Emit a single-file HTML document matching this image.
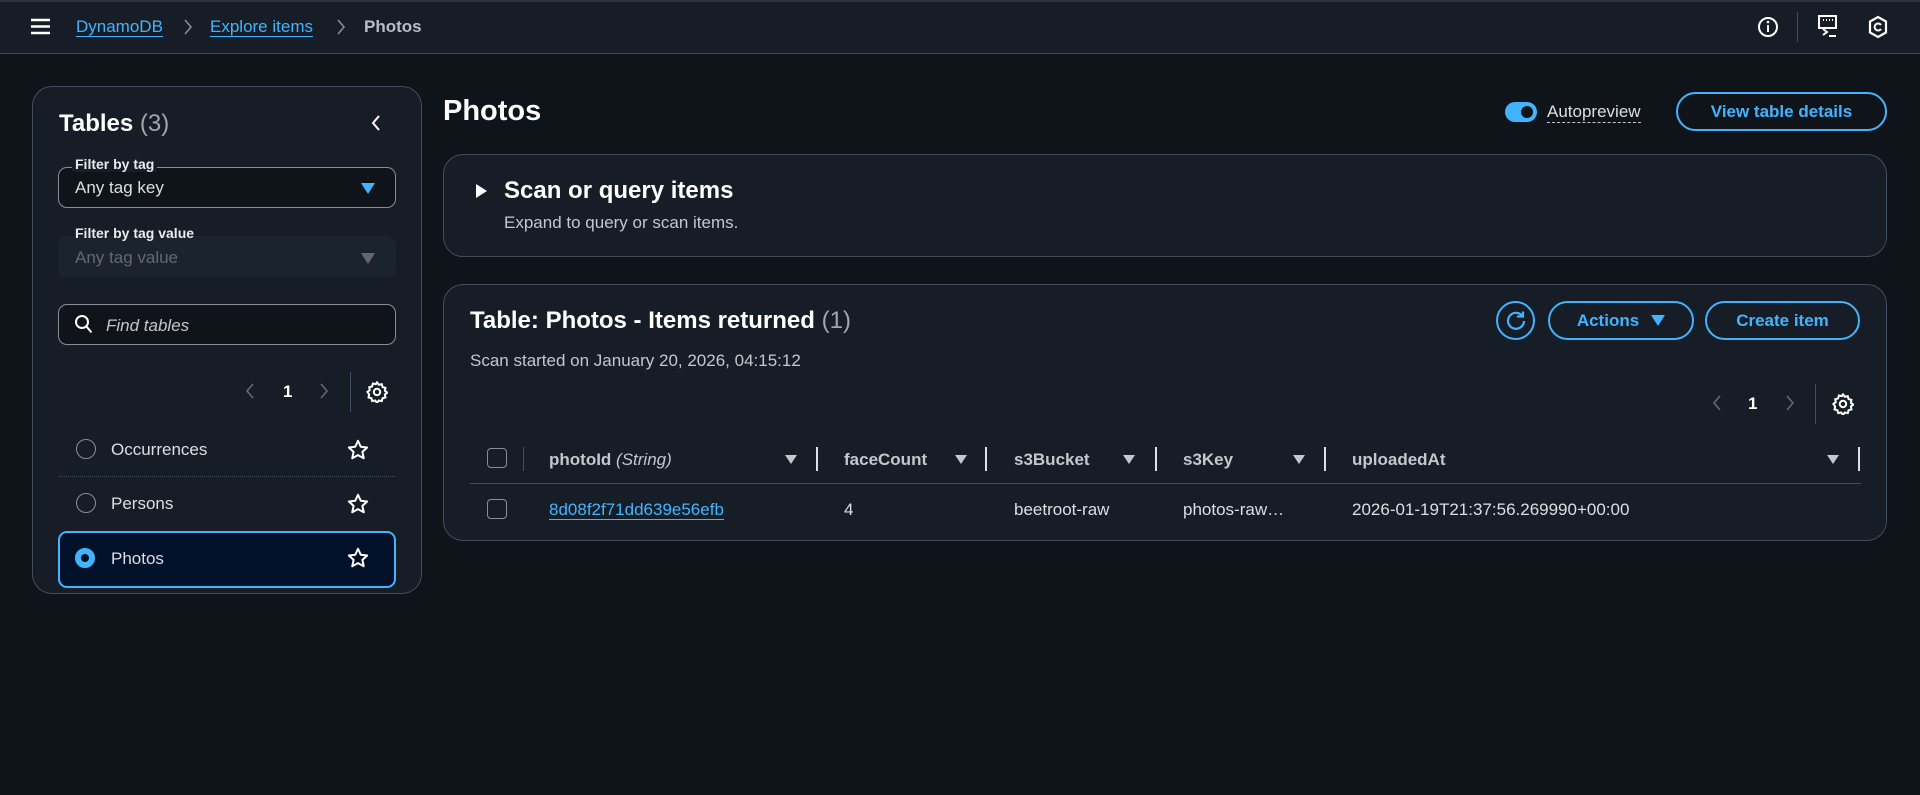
<!DOCTYPE html>
<html><head><meta charset="utf-8"><style>
*{box-sizing:border-box;margin:0;padding:0}
body{width:1920px;height:795px;background:#0f141a;font-family:"Liberation Sans",sans-serif;color:#dedee3;position:relative;overflow:hidden;font-size:17px}
.a{position:absolute}
.hdr{left:0;top:0;width:1920px;height:54px;background:#161d26;border-bottom:1px solid #414d5c;border-top:2px solid #2a323c}
.blue{color:#42b4ff}
.ul{border-bottom:1.5px solid #42b4ff;line-height:19px}
.panel{background:#161d26;border:1px solid #414d5c;border-radius:20px}
.lbl{font-size:14px;font-weight:bold;color:#e9ebed;background:#161d26;padding:0 3px;z-index:2;line-height:16px}
.sel{border:1px solid #8c8c94;border-radius:9px;background:#0f141a}
.btn{border:2px solid #42b4ff;border-radius:22px;color:#42b4ff;font-weight:bold;font-size:17px;display:flex;align-items:center;justify-content:center}
.th{font-weight:bold;color:#c6c6cd;font-size:17px}
.vd{width:2px;height:24px;background:#dedee3}
.sm{width:1px;height:24px;background:#414d5c}
.tri{width:0;height:0;border-left:6px solid transparent;border-right:6px solid transparent;border-top:9px solid #c6c6cd}
.cb{width:20px;height:20px;border:1.5px solid #8c8c94;border-radius:4px}
.radio{width:20px;height:20px;border:1.5px solid #8c8c94;border-radius:50%}
</style></head><body>
<div class="a hdr"></div>
<svg class="a" style="left:31px;top:18px" width="19" height="17" viewBox="0 0 19 17"><path d="M0 2h19M0 8.5h19M0 15h19" stroke="#fff" stroke-width="2.4"/></svg>
<div class="a blue ul" style="left:76px;top:17px">DynamoDB</div>
<svg class="a" style="left:183px;top:19px" width="10" height="16"><path d="M2 1l6 7-6 7" stroke="#8c8c94" stroke-width="1.6" fill="none"/></svg>
<div class="a blue ul" style="left:210px;top:17px">Explore items</div>
<svg class="a" style="left:336px;top:19px" width="10" height="16"><path d="M2 1l6 7-6 7" stroke="#8c8c94" stroke-width="1.6" fill="none"/></svg>
<div class="a" style="left:364px;top:17px;color:#b6bec9;font-weight:bold">Photos</div>
<svg class="a" style="left:1757px;top:16px" width="22" height="22"><circle cx="11" cy="11" r="9" stroke="#fff" stroke-width="2" fill="none"/><path d="M11 9v7" stroke="#fff" stroke-width="2"/><circle cx="11" cy="6" r="1.3" fill="#fff"/></svg>
<div class="a" style="left:1797px;top:12px;width:1px;height:30px;background:#414d5c"></div>
<svg class="a" style="left:1818px;top:15px" width="22" height="24"><rect x="1" y="1" width="17" height="12" stroke="#fff" stroke-width="2" fill="none"/><path d="M5 5h1M8 5h1M11 5h1M14 5h1" stroke="#fff" stroke-width="2"/><path d="M5 14l4 3-4 3M11 21h7" stroke="#fff" stroke-width="2" fill="none"/></svg>
<svg class="a" style="left:1868px;top:15px" width="20" height="24"><path d="M10 2l8 4.5v11L10 22l-8-4.5v-11z" stroke="#fff" stroke-width="2.2" fill="none"/><path d="M13 10a3.5 3.5 0 1 0 0 4" stroke="#fff" stroke-width="2" fill="none"/></svg>

<!-- left panel -->
<div class="a panel" style="left:32px;top:86px;width:390px;height:508px"></div>
<div class="a" style="left:59px;top:110px;font-size:24px;font-weight:bold;color:#fff">Tables <span style="font-weight:normal;color:#a4a4ad">(3)</span></div>
<svg class="a" style="left:370px;top:114px" width="12" height="18"><path d="M9 2L3 9l6 7" stroke="#fff" stroke-width="2" fill="none"/></svg>
<div class="a sel" style="left:58px;top:167px;width:338px;height:41px"></div>
<div class="a lbl" style="left:72px;top:156px">Filter by tag</div>
<div class="a" style="left:75px;top:178px;color:#dedee3">Any tag key</div>
<div class="a" style="left:361px;top:183px;border-left:7px solid transparent;border-right:7px solid transparent;border-top:11px solid #42b4ff"></div>
<div class="a" style="left:58px;top:236px;width:338px;height:42px;background:#1b232d;border-radius:9px"></div>
<div class="a lbl" style="left:72px;top:225px;background:transparent">Filter by tag value</div>
<div class="a" style="left:75px;top:248px;color:#656871">Any tag value</div>
<div class="a" style="left:361px;top:253px;border-left:7px solid transparent;border-right:7px solid transparent;border-top:11px solid #656871"></div>
<div class="a sel" style="left:58px;top:304px;width:338px;height:41px"></div>
<svg class="a" style="left:74px;top:314px" width="20" height="22"><circle cx="8" cy="8" r="6" stroke="#fff" stroke-width="2" fill="none"/><path d="M12.5 12.5l5 6" stroke="#fff" stroke-width="2"/></svg>
<div class="a" style="left:106px;top:316px;font-style:italic;color:#c6c6cd">Find tables</div>
<svg class="a" style="left:245px;top:382px" width="10" height="18"><path d="M8 2L2 9l6 7" stroke="#656871" stroke-width="1.6" fill="none"/></svg>
<div class="a" style="left:283px;top:382px;font-weight:bold;color:#fff">1</div>
<svg class="a" style="left:319px;top:382px" width="10" height="18"><path d="M2 2l6 7-6 7" stroke="#656871" stroke-width="1.6" fill="none"/></svg>
<div class="a" style="left:350px;top:372px;width:1px;height:40px;background:#414d5c"></div>
<svg class="a" style="left:366px;top:381px" width="22" height="22" viewBox="0 0 24 24"><path d="M12 1.5l2 2.6 3.2-.6.9 3.1 3.1.9-.6 3.2 2.6 2-2.6 2 .6 3.2-3.1.9-.9 3.1-3.2-.6-2 2.6-2-2.6-3.2.6-.9-3.1-3.1-.9.6-3.2L1.5 12l2.6-2-.6-3.2 3.1-.9.9-3.1 3.2.6z" stroke="#fff" stroke-width="2.2" fill="none"/><circle cx="12" cy="12" r="3.5" stroke="#fff" stroke-width="2.2" fill="none"/></svg>
<div class="a radio" style="left:76px;top:439px"></div>
<div class="a" style="left:111px;top:440px">Occurrences</div>
<svg class="a" style="left:347px;top:439px" width="22" height="21" viewBox="0 0 24 23"><path d="M12 2l3 6.5 7 .8-5.2 4.8 1.5 7L12 17.6 5.7 21.1l1.5-7L2 9.3l7-.8z" stroke="#fff" stroke-width="2.2" fill="none" stroke-linejoin="round"/></svg>
<div class="a" style="left:59px;top:476px;width:336px;border-top:1px dotted #414d5c"></div>
<div class="a radio" style="left:76px;top:493px"></div>
<div class="a" style="left:111px;top:494px">Persons</div>
<svg class="a" style="left:347px;top:493px" width="22" height="21" viewBox="0 0 24 23"><path d="M12 2l3 6.5 7 .8-5.2 4.8 1.5 7L12 17.6 5.7 21.1l1.5-7L2 9.3l7-.8z" stroke="#fff" stroke-width="2.2" fill="none" stroke-linejoin="round"/></svg>
<div class="a" style="left:58px;top:531px;width:338px;height:57px;background:#001129;border:2px solid #42b4ff;border-radius:9px"></div>
<div class="a" style="left:75px;top:548px;width:20px;height:20px;border-radius:50%;border:6px solid #42b4ff;background:#001129"></div>
<div class="a" style="left:111px;top:549px">Photos</div>
<svg class="a" style="left:347px;top:547px" width="22" height="21" viewBox="0 0 24 23"><path d="M12 2l3 6.5 7 .8-5.2 4.8 1.5 7L12 17.6 5.7 21.1l1.5-7L2 9.3l7-.8z" stroke="#fff" stroke-width="2.2" fill="none" stroke-linejoin="round"/></svg>

<!-- main -->
<div class="a" style="left:443px;top:95px;font-size:29px;font-weight:bold;color:#fff">Photos</div>
<div class="a" style="left:1505px;top:102px;width:32px;height:20px;border-radius:10px;background:#42b4ff"></div>
<div class="a" style="left:1521px;top:106px;width:12px;height:12px;border-radius:50%;background:#0f141a"></div>
<div class="a" style="left:1547px;top:102px;border-bottom:1px dashed #c6c6cd;line-height:20px">Autopreview</div>
<div class="a btn" style="left:1676px;top:92px;width:211px;height:39px">View table details</div>

<div class="a panel" style="left:443px;top:154px;width:1444px;height:103px;border-radius:20px"></div>
<div class="a" style="left:476px;top:184px;border-top:7px solid transparent;border-bottom:7px solid transparent;border-left:11px solid #fff"></div>
<div class="a" style="left:504px;top:177px;font-size:24px;font-weight:bold;color:#fff">Scan or query items</div>
<div class="a" style="left:504px;top:213px;color:#c6c6cd">Expand to query or scan items.</div>

<div class="a panel" style="left:443px;top:284px;width:1444px;height:257px;border-radius:20px"></div>
<div class="a" style="left:470px;top:307px;font-size:24px;font-weight:bold;color:#fff">Table: Photos - Items returned <span style="font-weight:normal;color:#a4a4ad">(1)</span></div>
<div class="a" style="left:470px;top:351px;color:#c6c6cd">Scan started on January 20, 2026, 04:15:12</div>
<div class="a" style="left:1496px;top:301px;width:39px;height:39px;border:2px solid #42b4ff;border-radius:50%"></div>
<svg class="a" style="left:1505px;top:310px" width="22" height="22"><path d="M17 5.5A8 8 0 1 0 19 11" stroke="#42b4ff" stroke-width="2.2" fill="none"/><path d="M12 4.5h6v-5" stroke="#42b4ff" stroke-width="2.2" fill="none" transform="translate(0,2)"/></svg>
<div class="a btn" style="left:1548px;top:301px;width:146px;height:39px">Actions <span style="display:inline-block;margin-left:12px;border-left:7px solid transparent;border-right:7px solid transparent;border-top:11px solid #42b4ff"></span></div>
<div class="a btn" style="left:1705px;top:301px;width:155px;height:39px">Create item</div>

<svg class="a" style="left:1712px;top:394px" width="10" height="18"><path d="M8 2L2 9l6 7" stroke="#656871" stroke-width="1.6" fill="none"/></svg>
<div class="a" style="left:1748px;top:394px;font-weight:bold;color:#fff">1</div>
<svg class="a" style="left:1785px;top:394px" width="10" height="18"><path d="M2 2l6 7-6 7" stroke="#656871" stroke-width="1.6" fill="none"/></svg>
<div class="a" style="left:1815px;top:384px;width:1px;height:40px;background:#414d5c"></div>
<svg class="a" style="left:1832px;top:393px" width="22" height="22" viewBox="0 0 24 24"><path d="M12 1.5l2 2.6 3.2-.6.9 3.1 3.1.9-.6 3.2 2.6 2-2.6 2 .6 3.2-3.1.9-.9 3.1-3.2-.6-2 2.6-2-2.6-3.2.6-.9-3.1-3.1-.9.6-3.2L1.5 12l2.6-2-.6-3.2 3.1-.9.9-3.1 3.2.6z" stroke="#fff" stroke-width="2.2" fill="none"/><circle cx="12" cy="12" r="3.5" stroke="#fff" stroke-width="2.2" fill="none"/></svg>

<div class="a cb" style="left:487px;top:448px"></div>
<div class="a sm" style="left:523px;top:447px"></div>
<div class="a th" style="left:549px;top:450px">photoId <i style="font-weight:normal">(String)</i></div>
<div class="a tri" style="left:785px;top:455px"></div>
<div class="a vd" style="left:816px;top:447px"></div>
<div class="a th" style="left:844px;top:450px">faceCount</div>
<div class="a tri" style="left:955px;top:455px"></div>
<div class="a vd" style="left:985px;top:447px"></div>
<div class="a th" style="left:1014px;top:450px">s3Bucket</div>
<div class="a tri" style="left:1123px;top:455px"></div>
<div class="a vd" style="left:1155px;top:447px"></div>
<div class="a th" style="left:1183px;top:450px">s3Key</div>
<div class="a tri" style="left:1293px;top:455px"></div>
<div class="a vd" style="left:1324px;top:447px"></div>
<div class="a th" style="left:1352px;top:450px">uploadedAt</div>
<div class="a tri" style="left:1827px;top:455px"></div>
<div class="a vd" style="left:1858px;top:447px"></div>
<div class="a" style="left:470px;top:483px;width:1391px;height:1px;background:#414d5c"></div>
<div class="a cb" style="left:487px;top:499px"></div>
<div class="a blue ul" style="left:549px;top:500px">8d08f2f71dd639e56efb</div>
<div class="a" style="left:844px;top:500px">4</div>
<div class="a" style="left:1014px;top:500px">beetroot-raw</div>
<div class="a" style="left:1183px;top:500px">photos-raw…</div>
<div class="a" style="left:1352px;top:500px">2026-01-19T21:37:56.269990+00:00</div>
</body></html>
